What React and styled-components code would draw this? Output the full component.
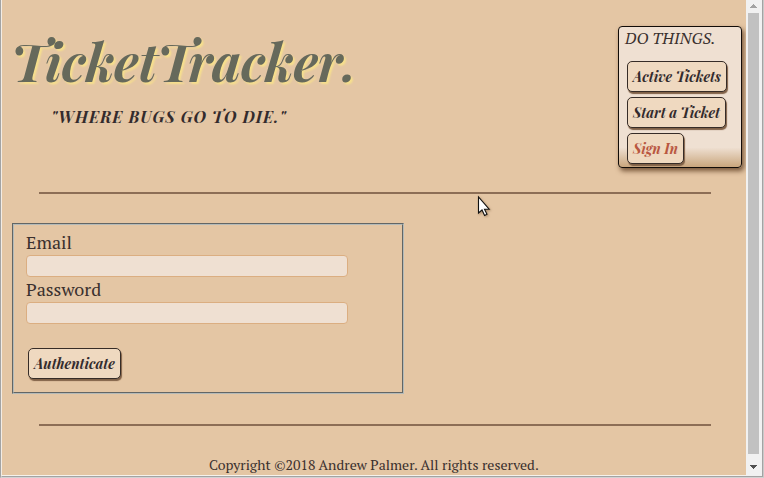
import React from 'react';
import styled, { createGlobalStyle } from 'styled-components';

const GlobalStyle = createGlobalStyle`
  * { box-sizing: border-box; }
  body { margin: 0; overflow: hidden; background: #c9c9c9; }
`;

const display = `"Playfair Display", "Liberation Serif", serif`;
const serif = `"PT Serif", "Liberation Serif", serif`;

const Window = styled.div`
  display: flex;
  position: relative;
  width: 764px;
  height: 478px;
  border-style: solid;
  border-width: 0 1px 1px 1px;
  border-color: #c9c9c9 #c9c9c9 #d2d2d2 #a3a3a3;
  background: #e4c6a4;
  font-family: ${serif};
  color: #3a302e;
`;

const Page = styled.main`
  width: 745px;
  height: 477px;
  flex: none;
  border-left: 1px solid #f3ece4;
  border-bottom: 1px solid #a3a3a3;
  box-shadow: inset 0 -1px 0 #f6f2ec;
  overflow: hidden;
`;

const Header = styled.header`
  display: flex;
  justify-content: space-between;
  height: 192px;
  padding: 26px 4px 0 12px;
`;

const Brand = styled.div`
  white-space: nowrap;
`;

const Title = styled.h1`
  margin: 0 0 0 -3px;
  padding-top: 3px;
  font: italic 700 52px/64px ${display};
  letter-spacing: -0.06px;
  color: #66695b;
  text-shadow: 2px 2px 2px #f7e08c;
`;

const Tagline = styled.h2`
  margin: 14px 0 0 37px;
  font: italic 700 16px/20px ${display};
  letter-spacing: 1px;
  color: #332b2d;
`;

const Menu = styled.nav`
  display: flex;
  flex-direction: column;
  align-items: flex-start;
  gap: 5px;
  width: 124px;
  height: 142px;
  padding: 0 0 0 8px;
  border: 1px solid #120c08;
  border-radius: 4px;
  background: linear-gradient(#efe0d2 86%, #c9a67d);
  box-shadow: 2px 3px 5px #765539;
`;

const MenuTitle = styled.div`
  height: 29px;
  margin-left: -2px;
  font: italic 400 16px/23px ${serif};
  letter-spacing: 0.18px;
  white-space: nowrap;
`;

const Button = styled.button`
  width: ${(p) => p.$width}px;
  height: 31px;
  padding: 0;
  border: 1px solid #362c27;
  border-radius: 5px;
  background: #efd9c0;
  box-shadow: 1px 2px 1px #806147;
  font: italic 700 14px/28px ${display};
  color: ${(p) => (p.$accent ? '#b95740' : '#332b2d')};
  white-space: nowrap;
`;

const Rule = styled.hr`
  width: 672px;
  height: 2px;
  margin: 0 0 0 37px;
  border: 0;
  background: #8c6e56;
`;

const Form = styled.form`
  width: 392px;
  height: 171px;
  margin: 29px 0 30px 10px;
  padding: 8px 12px;
  border: 2px groove #b4bab8;
`;

const Label = styled.label`
  display: block;
  height: 47px;
  font: 400 18px/18px ${serif};
`;

const Input = styled.input`
  display: block;
  width: 322px;
  height: 22px;
  margin: 4px 0 0;
  padding: 0 4px;
  border: 1px solid #dbae81;
  border-radius: 4px;
  outline: none;
  background: #efe0d2;
`;

const Actions = styled.div`
  padding: 21px 0 0 2px;
`;

const Footer = styled.footer`
  padding: 30px 0 0 207px;
  font: 400 14px/18px ${serif};
  letter-spacing: 0.02px;
  white-space: nowrap;
`;

const Scrollbar = styled.aside`
  display: flex;
  flex-direction: column;
  width: 17px;
  height: 477px;
  padding: 0 3px 0 2px;
  flex: none;
  background: #f1f1f1;
  box-shadow: inset -1px 0 #a3a3a3;
  border-bottom: 1px solid #a3a3a3;
`;

const Arrow = styled.svg`
  display: block;
  width: 11px;
  height: ${(p) => p.$height}px;
`;

const Thumb = styled.div`
  width: 11px;
  height: 441px;
  background: #c1c1c1;
`;

const Pointer = styled.svg`
  position: absolute;
  left: 475px;
  top: 195px;
  width: 16px;
  height: 24px;
  filter: drop-shadow(1px 1px 1px #80604088);
`;

export default function App() {
  return (
    <Window>
      <GlobalStyle />
      <Page>
        <Header>
          <Brand>
            <Title>TicketTracker.</Title>
            <Tagline>"WHERE BUGS GO TO DIE."</Tagline>
          </Brand>
          <Menu>
            <MenuTitle>DO THINGS.</MenuTitle>
            <Button $width={100}>Active Tickets</Button>
            <Button $width={99}>Start a Ticket</Button>
            <Button $width={57} $accent>Sign In</Button>
          </Menu>
        </Header>
        <Rule />
        <Form>
          <Label>Email<Input type="email" /></Label>
          <Label>Password<Input type="password" /></Label>
          <Actions>
            <Button type="button" $width={93}>Authenticate</Button>
          </Actions>
        </Form>
        <Rule />
        <Footer>Copyright ©2018 Andrew Palmer. All rights reserved.</Footer>
      </Page>
      <Scrollbar>
        <Arrow $height={13} viewBox="0 0 11 13" shapeRendering="crispEdges"><path d="M2 8 L5.5 4 L9 8Z" fill="#a3a3a3" /></Arrow>
        <Thumb />
        <Arrow $height={20} viewBox="0 0 11 20" shapeRendering="crispEdges"><path d="M2 11 H9 L5.5 15Z" fill="#505050" /></Arrow>
      </Scrollbar>
      <Pointer viewBox="0 0 16 24">
        <path d="M2.5 2 V18 L6 15 L8.6 20.5 L11 19.3 L8.5 14.2 H13.2 Z" fill="#fff" stroke="#111" strokeWidth="1.1" />
      </Pointer>
    </Window>
  );
}
